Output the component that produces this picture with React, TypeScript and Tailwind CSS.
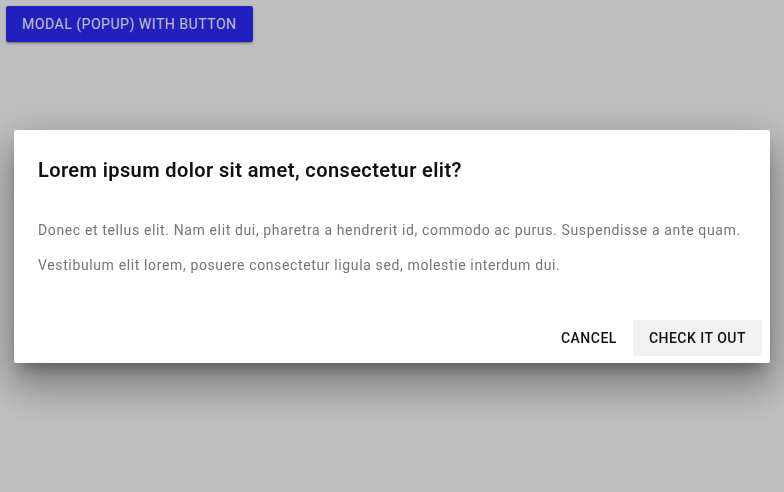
import React from "react";

const App = () => {
    return (
        <div className="relative min-h-screen w-full bg-white font-['Roboto',sans-serif]">
            {/* trigger */}
            <div className="p-[6px]">
                <button className="h-9 px-4 rounded-[2px] bg-[#2d2bff] text-white text-sm font-normal uppercase tracking-[0.038em] shadow-[0_3px_1px_-2px_rgba(0,0,0,0.2),0_2px_2px_0_rgba(0,0,0,0.14),0_1px_5px_0_rgba(0,0,0,0.12)]">
                    Modal (popup) with button
                </button>
            </div>

            {/* scrim + dialog */}
            <div className="fixed inset-0 flex items-center justify-center bg-[rgba(0,0,0,0.25)] px-[14px]">
                <div className="w-full bg-white rounded-[2px] shadow-[0_11px_15px_-7px_rgba(0,0,0,0.35),0_24px_38px_3px_rgba(0,0,0,0.24),0_9px_46px_8px_rgba(0,0,0,0.14)]">
                    <h2 className="px-6 pt-6 pb-[34px] text-[20px] leading-8 font-semibold tracking-[0.02em] text-[#111]">
                        Lorem ipsum dolor sit amet, consectetur elit?
                    </h2>
                    <div className="px-6 pb-[37px] text-sm leading-5 tracking-[0.045em] text-[#757575]">
                        <p className="mb-[15px]">
                            Donec et tellus elit. Nam elit dui, pharetra a hendrerit id, commodo ac purus. Suspendisse a ante quam.
                        </p>
                        <p>Vestibulum elit lorem, posuere consectetur ligula sed, molestie interdum dui.</p>
                    </div>
                    <div className="flex justify-end items-center gap-2 px-2 pt-2 pb-[7px]">
                        <button className="h-9 px-2 min-w-16 rounded-[2px] text-sm font-medium uppercase tracking-[0.035em] text-[#111]">
                            Cancel
                        </button>
                        <button className="h-9 px-4 rounded-[2px] bg-[#f1f1f1] text-sm font-medium uppercase tracking-[0.035em] text-[#111]">
                            Check it out
                        </button>
                    </div>
                </div>
            </div>
        </div>
    );
};

export default App;
